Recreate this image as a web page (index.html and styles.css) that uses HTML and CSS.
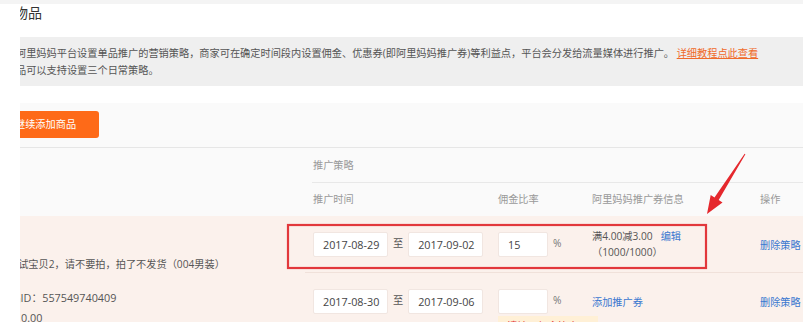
FILE: index.html
```html
<!DOCTYPE html>
<html lang="zh-CN">
<head>
<meta charset="utf-8">
<title>单品推广</title>
<link rel="stylesheet" href="styles.css">
</head>
<body>
<div class="topbar"></div>
<div class="page">
  <div class="clip">
    <h2 class="title">物品</h2>
    <div class="notice">
      <p>阿里妈妈平台设置单品推广的营销策略，商家可在确定时间段内设置佣金、优惠券(即阿里妈妈推广券)等利益点，平台会分发给流量媒体进行推广。 <a class="guide" href="#">详细教程点此查看</a></p>
      <p>品可以支持设置三个日常策略。</p>
    </div>
    <div class="panel">
      <div class="toolbar"><button class="btn" type="button">继续添加商品</button></div>
      <div class="grid thead">
        <div class="th-strategy">推广策略</div>
        <div class="th th-time">推广时间</div>
        <div class="th">佣金比率</div>
        <div class="th">阿里妈妈推广券信息</div>
        <div class="th">操作</div>
      </div>
      <div class="grid tbody">
        <div class="prod">
          <div class="prod-name">测试宝贝2，请不要拍，拍了不发货（004男装）</div>
          <div class="prod-id">商品ID：557549740409</div>
          <div class="prod-price">0.00</div>
        </div>

        <div class="cell first">
          <input class="inp date" type="text" value="2017-08-29" readonly>
          <span class="to">至</span>
          <input class="inp date" type="text" value="2017-09-02" readonly>
        </div>
        <div class="cell first">
          <input class="inp rate" type="text" value="15" readonly>
          <span class="pct">%</span>
        </div>
        <div class="cell first">
          <div class="coupon">
            <div>满4.00减3.00<a class="link edit" href="#">编辑</a></div>
            <div>（1000/1000）</div>
          </div>
        </div>
        <div class="cell first"><a class="link" href="#">删除策略</a></div>

        <div class="cell">
          <input class="inp date" type="text" value="2017-08-30" readonly>
          <span class="to">至</span>
          <input class="inp date" type="text" value="2017-09-06" readonly>
        </div>
        <div class="cell rate-cell">
          <input class="inp rate" type="text" value="" readonly>
          <span class="pct">%</span>
          <div class="tip">请输入佣金比率</div>
        </div>
        <div class="cell"><a class="link" href="#">添加推广券</a></div>
        <div class="cell"><a class="link" href="#">删除策略</a></div>
      </div>
    </div>
  </div>
</div>
<svg class="annot" width="803" height="322" viewBox="0 0 803 322" aria-hidden="true">
  <rect x="288" y="225" width="418" height="43" fill="none" stroke="#e2383c" stroke-width="2.2"/>
  <polygon fill="#e5282d" points="744.6,153.7 745.4,154.3 718.7,200.1 722.5,202.5 707,214 710.7,195.1 714.5,197.5"/>
</svg>
</body>
</html>
```

FILE: styles.css
```css
* { box-sizing: border-box; }

body {
  margin: 0;
  width: 803px;
  height: 322px;
  overflow: hidden;
  position: relative;
  background: #fff;
  font-family: "Open Sans", "Noto Sans CJK SC", sans-serif;
  font-size: 10.2px;
  color: #555;
}

.topbar {
  height: 4px;
  background: #f4f4f4;
}

.page {
  padding-left: 20px;
}

.clip {
  overflow: hidden;
  height: 318px;
}

.title {
  margin: 1px 0 0 -6px;
  font-size: 14px;
  line-height: 16px;
  font-weight: normal;
  color: #333;
}

.notice {
  margin-top: 16px;
  background: #efefef;
  padding: 8px 0 7px;
  line-height: 17px;
  color: #555;
}

.notice p {
  margin: 0 0 0 -4px;
  white-space: nowrap;
}

.guide {
  color: #f06a2a;
  text-decoration: underline;
}

.panel {
  margin-top: 17px;
  background: #fafafa;
}

.toolbar {
  padding: 8px 0 9px;
  border-bottom: 1px solid #e6e6e6;
}

.btn {
  display: block;
  margin-left: -25px;
  height: 27px;
  padding: 0 23px 0 20px;
  border: 0;
  border-radius: 3px;
  background: #fe6a18;
  color: #fff;
  font: inherit;
  line-height: 27px;
}

.grid {
  display: grid;
  grid-template-columns: 285px 185px 94px 168px 1fr;
}

.thead {
  color: #999;
}

.th-strategy {
  grid-column: 2 / -1;
  grid-row: 1;
  height: 35px;
  line-height: 34px;
  margin-left: 7px;
  padding-left: 1px;
  border-bottom: 1px solid #e8e8e8;
}

.th {
  height: 33px;
  line-height: 33px;
  padding-left: 8px;
  white-space: nowrap;
}

.th-time {
  grid-column: 2;
}

.tbody {
  background: #fbf1ec;
}

.prod {
  grid-column: 1;
  grid-row: span 2;
  padding-top: 40px;
  white-space: nowrap;
  color: #555;
}

.prod-name {
  line-height: 16px;
  margin-left: -12px;
}

.prod-id {
  margin-top: 16px;
  line-height: 20px;
  margin-left: -21px;
  font-size: 10.8px;
}

.prod-price {
  line-height: 20px;
  padding-left: 1px;
  font-size: 10.8px;
}

.cell {
  position: relative;
  height: 56px;
  padding-left: 8px;
  display: flex;
  align-items: center;
  white-space: nowrap;
}

.cell.first {
  height: 57px;
  border-bottom: 1px solid #f0e1da;
}

.inp {
  height: 25px;
  border: 1px solid #f1e6e1;
  border-radius: 2px;
  background: #fff;
  padding: 0 0 0 9px;
  font-family: "Open Sans", "Noto Sans CJK SC", sans-serif;
  font-size: 10.8px;
  color: #444;
  outline: none;
}

.date {
  width: 75px;
}

.rate {
  width: 50px;
}

.to {
  margin: -3px 5px 0;
  color: #555;
}

.pct {
  margin: -3px 0 0 5px;
  color: #777;
}

.coupon {
  line-height: 16px;
  color: #555;
}

.link {
  color: #3a78d0;
  text-decoration: none;
}

.edit {
  margin-left: 8px;
}

.tip {
  position: absolute;
  left: 8px;
  top: 43px;
  width: 100px;
  padding: 2px 0 0 9px;
  line-height: 16px;
  background: #fff0d6;
  color: #e4393c;
}

.annot {
  position: absolute;
  top: 0;
  left: 0;
  pointer-events: none;
}
```
